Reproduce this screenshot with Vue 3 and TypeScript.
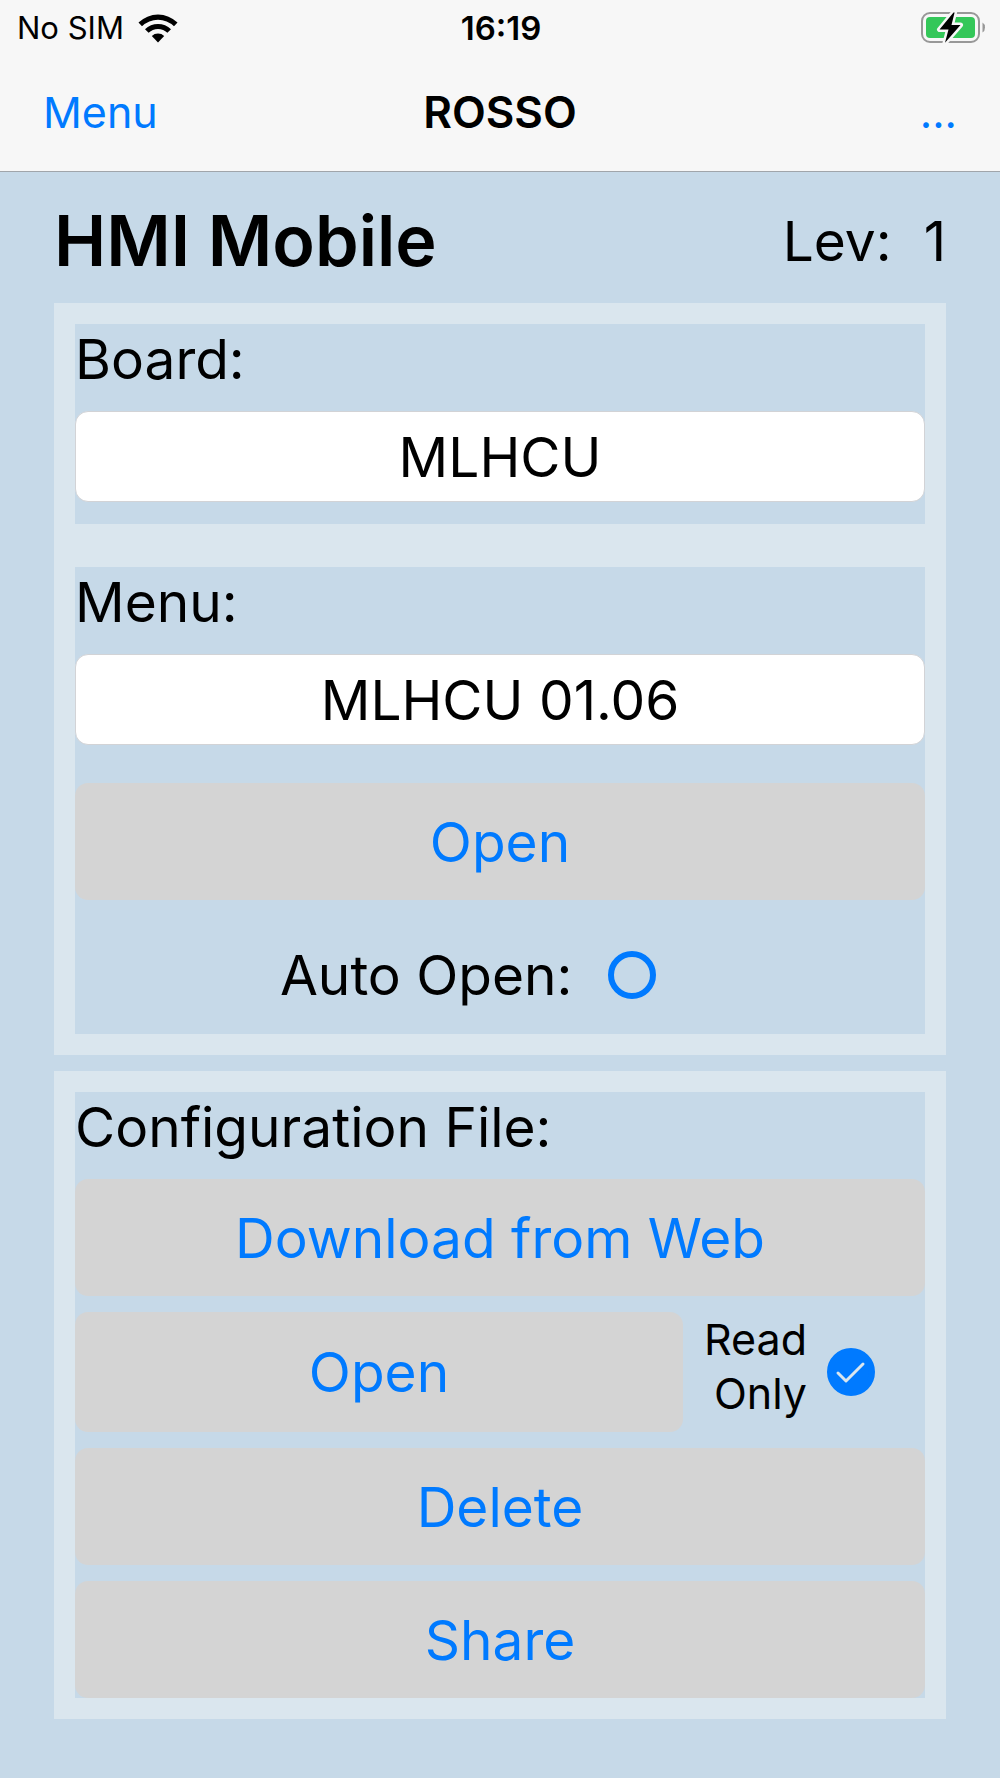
<script setup lang="ts">
import { ref } from 'vue'

const board = ref('MLHCU')
const menu = ref('MLHCU 01.06')
const level = ref(1)
const autoOpen = ref(false)
const readOnly = ref(true)
</script>

<template>
  <div class="app">
    <header class="top">
      <div class="status">
        <div class="carrier">
          <span>No SIM</span>
          <svg class="wifi" viewBox="0 0 40 30" aria-hidden="true">
            <path d="M0.5 9.5A28 28 0 0 1 39.5 9.5L36 13.2A23 23 0 0 0 4 13.2Z" />
            <path d="M7 16.2A18.6 18.6 0 0 1 33 16.2L29.4 19.8A13.5 13.5 0 0 0 10.6 19.8Z" />
            <path d="M13.8 23A9 9 0 0 1 26.2 23L20 29.4Z" />
          </svg>
        </div>
        <time class="clock">16:19</time>
        <svg class="battery" viewBox="0 0 64 34" aria-label="Battery charging">
          <rect x="1" y="2" width="57" height="29" rx="8" fill="none" stroke="#989898" stroke-width="2" />
          <path d="M61.5 11.5Q64 13 64 16.5T61.5 21.5Z" fill="#989898" />
          <rect x="5" y="6" width="49" height="21" rx="4" fill="#34c759" />
          <path
            d="M32.5 1.5L18.5 18.5H27.5L24 31.8L39.5 14H30.5L33.6 1.5Z"
            fill="#000"
            stroke="#f7f7f7"
            stroke-width="5"
            stroke-linejoin="round"
            paint-order="stroke"
          />
        </svg>
      </div>
      <nav class="nav">
        <button type="button" class="nav-button">Menu</button>
        <span class="nav-title">ROSSO</span>
        <button type="button" class="nav-button end" aria-label="More">...</button>
      </nav>
    </header>

    <main class="content">
      <div class="heading">
        <h1>HMI Mobile</h1>
        <p class="level"><span>Lev:</span><span>{{ level }}</span></p>
      </div>

      <section class="panel">
        <div class="block padded">
          <label class="label" for="board">Board:</label>
          <input id="board" v-model="board" class="field" type="text" />
        </div>
        <div class="block">
          <label class="label" for="menu">Menu:</label>
          <input id="menu" v-model="menu" class="field" type="text" />
          <button type="button" class="action spaced">Open</button>
          <div class="auto-row">
            <label for="auto-open">Auto Open:</label>
            <span class="tick">
              <input id="auto-open" v-model="autoOpen" type="checkbox" />
              <svg v-if="autoOpen" viewBox="0 0 48 48" aria-hidden="true"><path d="M11 25L19 33L36 16" /></svg>
            </span>
          </div>
        </div>
      </section>

      <section class="panel">
        <div class="block">
          <h2 class="label">Configuration File:</h2>
          <button type="button" class="action">Download from Web</button>
          <div class="file-row">
            <button type="button" class="action">Open</button>
            <label class="small-label" for="read-only">Read Only</label>
            <span class="tick">
              <input id="read-only" v-model="readOnly" type="checkbox" />
              <svg v-if="readOnly" viewBox="0 0 48 48" aria-hidden="true"><path d="M11 25L19 33L36 16" /></svg>
            </span>
          </div>
          <button type="button" class="action">Delete</button>
          <button type="button" class="action">Share</button>
        </div>
      </section>
    </main>
  </div>
</template>

<style>
body {
  margin: 0;
  background: #c6d9e8;
}
</style>

<style scoped>
.app {
  min-height: 100vh;
  background: #c6d9e8;
  color: #000;
  font-family: Inter, "Liberation Sans", sans-serif;
  font-size: 55px;
}

.app * {
  box-sizing: border-box;
}

button,
input {
  margin: 0;
  padding: 0;
  border: 0;
  font: inherit;
}

h1,
h2,
p {
  margin: 0;
  font-weight: 400;
}

.top {
  background: #f7f7f7;
  border-bottom: 1px solid #a0a5aa;
}

.status {
  display: grid;
  grid-template-columns: 1fr auto 1fr;
  align-items: center;
  height: 55px;
  padding: 0 15px 0 17px;
  font-size: 31px;
}

.carrier {
  display: flex;
  align-items: center;
  gap: 14px;
}

.wifi {
  width: 40px;
  height: 30px;
}

.clock {
  font-size: 33px;
  font-weight: 600;
}

.battery {
  justify-self: end;
  width: 64px;
  height: 34px;
}

.nav {
  display: grid;
  grid-template-columns: 1fr auto 1fr;
  align-items: center;
  height: 116px;
  padding: 0 43px 2px;
  font-size: 44px;
}

.nav-title {
  font-weight: 600;
}

.nav-button {
  justify-self: start;
  background: none;
  color: #007aff;
  font-size: 43px;
}

.nav-button.end {
  justify-self: end;
}

.content {
  display: flex;
  flex-direction: column;
  gap: 16px;
  padding: 22px 54px 59px;
}

.heading {
  display: flex;
  align-items: center;
  justify-content: space-between;
  height: 93px;
}

.heading h1 {
  font-size: 70px;
  font-weight: 600;
}

.level {
  display: flex;
  gap: 32px;
}

.panel {
  display: flex;
  flex-direction: column;
  gap: 43px;
  padding: 21px;
  background: #dae6ee;
}

.block {
  display: flex;
  flex-direction: column;
  gap: 16px;
  background: #c6d9e8;
}

.padded {
  padding-bottom: 22px;
}

.label {
  font-size: 55px;
  line-height: 71px;
}

.field {
  width: 100%;
  height: 91px;
  border: 1px solid #d2d3d6;
  border-radius: 13px;
  background: #fff;
  color: #000;
  text-align: center;
}

.action {
  height: 117px;
  border-radius: 13px;
  background: #d4d4d4;
  color: #007aff;
}

.spaced {
  margin-top: 22px;
}

.auto-row {
  display: grid;
  grid-template-columns: 11fr 7fr;
  align-items: center;
  gap: 36px;
  height: 118px;
  text-align: right;
}

.file-row {
  display: grid;
  grid-template-columns: 1fr 124px 118px;
  height: 120px;
}

.file-row .action {
  height: 100%;
}

.small-label {
  font-size: 43px;
  line-height: 54px;
  text-align: right;
}

.file-row .tick {
  align-self: center;
  margin-left: 20px;
}

.tick {
  display: grid;
  width: 48px;
  height: 48px;
}

.tick > * {
  grid-area: 1 / 1;
}

.tick input {
  width: 48px;
  height: 48px;
  appearance: none;
  border: 6px solid #007aff;
  border-radius: 50%;
}

.tick input:checked {
  background: #007aff;
}

.tick svg {
  width: 48px;
  height: 48px;
  pointer-events: none;
}

.tick path {
  fill: none;
  stroke: #dae6ee;
  stroke-width: 3;
  stroke-linecap: round;
  stroke-linejoin: round;
}
</style>
